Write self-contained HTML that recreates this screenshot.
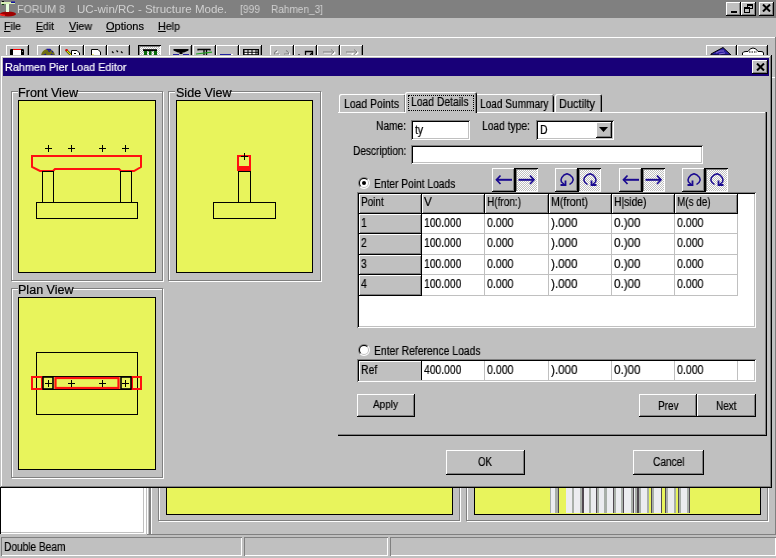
<!DOCTYPE html><html><head><meta charset="utf-8"><style>
html,body{margin:0;padding:0}
body{width:776px;height:558px;overflow:hidden;background:#c0c0c0;position:relative;font-family:"Liberation Sans",sans-serif}
body div,body span,body svg{position:absolute}
.t{white-space:nowrap;transform-origin:0 0;will-change:transform;-webkit-text-stroke:0.2px currentColor}
.rz{background:#c0c0c0;box-shadow:inset -1px -1px #000,inset 1px 1px #fff,inset -2px -2px #808080}
.pz{background:repeating-conic-gradient(#fff 0 25%,#c0c0c0 0 50%) 0 0/2px 2px;box-shadow:inset 1px 1px #000,inset -1px -1px #fff,inset 2px 2px #808080}
.sk{box-shadow:inset 1px 1px #808080,inset -1px -1px #fff,inset 2px 2px #000,inset -2px -2px #c0c0c0}
</style></head><body>

<div style="left:0px;top:0px;width:776px;height:18px;background:#808080"></div>
<svg style="left:0;top:0" width="17" height="18" viewBox="0 0 17 18">
<ellipse cx="8" cy="14" rx="8" ry="2.6" fill="#a00000"/>
<path d="M0 14.5 L5 15.5" stroke="#ff2020" stroke-width="1.5"/>
<rect x="1" y="2" width="14" height="2" fill="#d8f0b8"/>
<rect x="11" y="1.5" width="4" height="1.5" fill="#1010a0"/>
<rect x="6" y="4" width="3" height="8" fill="#e8ffe0"/>
<rect x="2" y="1" width="2" height="1" fill="#000"/>
<rect x="2" y="4" width="2" height="1" fill="#004000"/>
</svg>
<span class="t" style="left:17.2px;top:4.1px;font-size:11px;line-height:11px;color:#d0d0d0;transform:scaleX(0.9697);-webkit-text-stroke:0">FORUM 8</span>
<span class="t" style="left:77.2px;top:4.1px;font-size:11px;line-height:11px;color:#d0d0d0;transform:scaleX(1.0486);-webkit-text-stroke:0">UC-win/RC - Structure Mode.</span>
<span class="t" style="left:240.2px;top:4.1px;font-size:11px;line-height:11px;color:#d0d0d0;transform:scaleX(0.9336);-webkit-text-stroke:0">[999</span>
<span class="t" style="left:271.2px;top:4.1px;font-size:11px;line-height:11px;color:#d0d0d0;transform:scaleX(0.9143);-webkit-text-stroke:0">Rahmen_3]</span>
<div class="rz" style="left:726px;top:2px;width:15px;height:14px;"></div>
<div class="rz" style="left:741px;top:2px;width:15px;height:14px;"></div>
<div class="rz" style="left:759px;top:2px;width:15px;height:14px;"></div>
<div style="left:731px;top:11px;width:6px;height:2px;background:#000"></div>
<div style="left:747px;top:4px;width:6px;height:5px;border:1px solid #000;border-top-width:2px;box-sizing:border-box"></div>
<div style="left:744px;top:7px;width:6px;height:6px;border:1px solid #000;border-top-width:2px;box-sizing:border-box;background:#c0c0c0"></div>
<svg style="left:762px;top:4px" width="9" height="8"><path d="M1 0.5 L8 7.5 M8 0.5 L1 7.5" stroke="#000" stroke-width="2"/></svg>
<span class="t" style="left:4.2px;top:20.7px;font-size:11px;line-height:11px;color:#000;transform:scaleX(0.9577);"><u>F</u>ile</span>
<span class="t" style="left:36.2px;top:20.7px;font-size:11px;line-height:11px;color:#000;transform:scaleX(0.9489);"><u>E</u>dit</span>
<span class="t" style="left:69.2px;top:20.7px;font-size:11px;line-height:11px;color:#000;transform:scaleX(0.9723);"><u>V</u>iew</span>
<span class="t" style="left:106.2px;top:20.7px;font-size:11px;line-height:11px;color:#000;transform:scaleX(1.0021);"><u>O</u>ptions</span>
<span class="t" style="left:158.2px;top:20.7px;font-size:11px;line-height:11px;color:#000;transform:scaleX(0.9717);"><u>H</u>elp</span>
<div style="left:0px;top:37px;width:775px;height:1px;background:#fff"></div>
<div style="left:775px;top:37px;width:1px;height:30px;background:#808080"></div>
<div class="rz" style="left:6px;top:45px;width:23px;height:23px;"></div>
<div class="rz" style="left:37px;top:45px;width:23px;height:23px;"></div>
<div class="rz" style="left:60px;top:45px;width:24px;height:23px;"></div>
<div class="rz" style="left:84px;top:45px;width:23px;height:23px;"></div>
<div class="rz" style="left:107px;top:45px;width:23px;height:23px;"></div>
<div class="rz" style="left:169px;top:45px;width:23px;height:23px;"></div>
<div class="rz" style="left:193px;top:45px;width:23px;height:23px;"></div>
<div class="rz" style="left:216px;top:45px;width:23px;height:23px;"></div>
<div class="rz" style="left:239px;top:45px;width:23px;height:23px;"></div>
<div class="rz" style="left:270px;top:45px;width:24px;height:23px;"></div>
<div class="rz" style="left:294px;top:45px;width:23px;height:23px;"></div>
<div class="rz" style="left:317px;top:45px;width:23px;height:23px;"></div>
<div class="rz" style="left:340px;top:45px;width:23px;height:23px;"></div>
<div class="rz" style="left:706px;top:45px;width:31px;height:23px;"></div>
<div class="rz" style="left:737px;top:45px;width:31px;height:23px;"></div>
<div class="pz" style="left:138px;top:45px;width:23px;height:23px;"></div>
<svg style="left:10px;top:48px" width="15" height="8" viewBox="0 0 15 8"><path d="M0 2 Q0 1 1.5 1 H3 V8 H0 Z M11 1 H12.5 Q14 1 14 2 V8 H11 Z" fill="#000"/><rect x="3" y="1" width="8" height="7" fill="#fff"/><rect x="3" y="1" width="8" height="1" fill="#f00"/><rect x="12" y="3" width="1" height="1" fill="#808080"/></svg>
<svg style="left:40px;top:48px" width="16" height="8" viewBox="0 0 16 8"><path d="M1 8 A7 7 0 0 1 15 8 Z" fill="#707010"/><path d="M6.5 1.3 H10 L11 2.5 M8 2.5 L10 3.5 M12 3 L13 4.5 M1.5 7.5 H4 L6 6 M11 6 L12.5 7.5 H15" stroke="#1a10a0" stroke-width="1.3" fill="none"/></svg>
<svg style="left:62px;top:49px" width="20" height="7" viewBox="0 0 20 7"><path d="M2 6.5 H7" stroke="#000"/><path d="M4 1 L9 6" stroke="#000" stroke-width="2.4"/><path d="M4 1 L9 6" stroke="#e8e800" stroke-width="1.2"/><rect x="3.5" y="0" width="2" height="2" fill="#e00"/><path d="M9.5 7 V1.5 H15 L17.5 4 V7" fill="#fff" stroke="#000"/><path d="M12 4.5 H14" stroke="#000"/></svg>
<svg style="left:90px;top:48px" width="12" height="8" viewBox="0 0 12 8"><path d="M1.5 8 V1.5 H8 L10.5 4 V8" fill="#fff" stroke="#000"/><rect x="2" y="6.5" width="2" height="1.5" fill="#e0e000"/></svg>
<svg style="left:111px;top:50px" width="14" height="5" viewBox="0 0 14 5"><path d="M1 1.5 L2.5 3 M5.5 0.5 L7 2 M10 1.5 L11.5 3" stroke="#000" stroke-width="1.2"/></svg>
<svg style="left:142px;top:48px" width="16" height="8" viewBox="0 0 16 8"><rect x="1" y="1.2" width="14" height="2" fill="#000"/><rect x="2" y="3" width="3" height="5" fill="#0a6a0a"/><rect x="7" y="3" width="2.5" height="5" fill="#0a6a0a"/><rect x="12" y="3" width="3" height="5" fill="#0a6a0a"/></svg>
<svg style="left:172px;top:48px" width="18" height="8" viewBox="0 0 18 8"><path d="M1.5 1 H16.5 V2.5 L12 4.5 H10.5 V6 H7.5 V4.5 H6 L1.5 2.5 Z" fill="#000"/><path d="M1 6.5 H7 M11 6.5 H17" stroke="#2020a0" stroke-width="1.2"/></svg>
<svg style="left:195px;top:48px" width="19" height="8" viewBox="0 0 19 8"><path d="M3 2.5 V1.5 H15 V2.5" stroke="#000" stroke-width="1.3" fill="none"/><path d="M9 1.5 V8 M11.5 1.5 V8" stroke="#000" stroke-width="1.3"/><path d="M1 6 L17 4.2" stroke="#20a020" stroke-width="1.2"/></svg>
<div style="left:220px;top:54px;width:11px;height:1px;background:#2020a0"></div>
<div style="left:231px;top:54px;width:2px;height:1px;background:#fff"></div>
<svg style="left:243px;top:49px" width="16" height="7" viewBox="0 0 16 7"><rect x="0" y="0" width="16" height="7" fill="#000"/><path d="M1.5 2 H14.5 M1.5 4.5 H14.5" stroke="#fff" stroke-width="1.3" stroke-dasharray="3 1"/></svg>
<svg style="left:273px;top:49px" width="18" height="7" viewBox="0 0 18 7"><g stroke="#fff" fill="none" stroke-width="1.3" transform="translate(1,1)"><path d="M4 1.5 Q1 3 1.5 5 H6 M11 5 H15.5 Q16 3 13 1.5"/></g><g stroke="#808080" fill="none" stroke-width="1.1"><path d="M4 1.5 Q1 3 1.5 5 H6 M11 5 H15.5 Q16 3 13 1.5"/></g></svg>
<svg style="left:297px;top:50px" width="17" height="6" viewBox="0 0 17 6"><path d="M1.5 4 L3 5.5" stroke="#000"/><path d="M8.5 6 V1.5 H15.5 V6 M13 5 L15 3" stroke="#000" stroke-width="1.3" fill="none"/></svg>
<svg style="left:322px;top:49px" width="14" height="7" viewBox="0 0 14 7"><g stroke="#fff" fill="none" stroke-width="1.2" transform="translate(1,1)"><path d="M1 3 H12 M9 0.5 L12 3 L9 5.5"/></g><g stroke="#808080" fill="none"><path d="M1 3 H12 M9 0.5 L12 3 L9 5.5"/></g></svg>
<svg style="left:345px;top:49px" width="14" height="7" viewBox="0 0 14 7"><g stroke="#fff" fill="none" stroke-width="1.2" transform="translate(1,1)"><path d="M1 3 H12 M9 0.5 L12 3 L9 5.5 M5 6 L8 2"/></g><g stroke="#808080" fill="none"><path d="M1 3 H12 M9 0.5 L12 3 L9 5.5"/></g></svg>
<svg style="left:710px;top:46px" width="22" height="9" viewBox="0 0 22 9"><path d="M1 9 V8 L13 1.5 L21 9 Z" fill="#2a1ea0" stroke="#000" stroke-width="1"/><path d="M6 7 Q10 4 14 5 M9 8 L15 7" stroke="#8a70d0" fill="none"/></svg>
<svg style="left:741px;top:47px" width="24" height="8" viewBox="0 0 24 8"><path d="M1.5 8 V6 Q2 4.5 5 4.5 H7 Q9 1 12 1 Q15 1 17 4.5 H20 Q22.5 4.5 22.5 6 V8" fill="#fff" stroke="#000"/><path d="M8 5 H16" stroke="#808080" stroke-width="2" stroke-dasharray="1.5 1"/></svg>
<div style="left:772px;top:55px;width:3px;height:432px;background:#c0c0c0"></div>
<div style="left:772px;top:77px;width:3px;height:1px;background:#fff"></div>
<div style="left:0px;top:487px;width:145px;height:47px;background:#fff;border-left:1px solid #000;border-top:1px solid #000;box-sizing:border-box;box-shadow:inset -1px -1px #fff,inset -2px -2px #c0c0c0"></div>
<div style="left:145px;top:487px;width:1px;height:47px;background:#fff"></div>
<div style="left:147px;top:487px;width:1px;height:47px;background:#fff"></div>
<div style="left:149px;top:487px;width:2px;height:48px;background:#808080"></div>
<div style="left:151px;top:487px;width:1px;height:47px;background:#fff"></div>
<div style="left:158px;top:470px;width:300px;height:49px;border:1px solid #808080;box-shadow:inset 1px 1px #fff,1px 1px #fff"></div>
<div style="left:166px;top:480px;width:287px;height:35px;background:#e8f45c;border:1px solid #000;box-sizing:border-box"></div>
<div style="left:466px;top:470px;width:300px;height:49px;border:1px solid #808080;box-shadow:inset 1px 1px #fff,1px 1px #fff"></div>
<div style="left:474px;top:480px;width:287px;height:35px;background:#e8f45c;border:1px solid #000;box-sizing:border-box"></div>
<div style="left:550px;top:488px;width:1px;height:25px;background:#a8aea8"></div>
<div style="left:551px;top:488px;width:4px;height:25px;background:#ececf0"></div>
<div style="left:555px;top:488px;width:3px;height:25px;background:#a8aea8"></div>
<div style="left:558px;top:488px;width:1px;height:25px;background:#504850"></div>
<div style="left:559px;top:488px;width:7px;height:25px;background:#e8f45c"></div>
<div style="left:566px;top:488px;width:6px;height:25px;background:#ececf0"></div>
<div style="left:572px;top:488px;width:2px;height:25px;background:#a8aea8"></div>
<div style="left:574px;top:488px;width:6px;height:25px;background:#ececf0"></div>
<div style="left:580px;top:488px;width:2px;height:25px;background:#a8aea8"></div>
<div style="left:582px;top:488px;width:2px;height:25px;background:#504850"></div>
<div style="left:584px;top:488px;width:5px;height:25px;background:#ececf0"></div>
<div style="left:589px;top:488px;width:2px;height:25px;background:#a8aea8"></div>
<div style="left:591px;top:488px;width:5px;height:25px;background:#ececf0"></div>
<div style="left:596px;top:488px;width:1px;height:25px;background:#504850"></div>
<div style="left:597px;top:488px;width:2px;height:25px;background:#a8aea8"></div>
<div style="left:599px;top:488px;width:5px;height:25px;background:#ececf0"></div>
<div style="left:604px;top:488px;width:3px;height:25px;background:#a8aea8"></div>
<div style="left:607px;top:488px;width:6px;height:25px;background:#ececf0"></div>
<div style="left:613px;top:488px;width:1px;height:25px;background:#504850"></div>
<div style="left:614px;top:488px;width:2px;height:25px;background:#a8aea8"></div>
<div style="left:616px;top:488px;width:5px;height:25px;background:#ececf0"></div>
<div style="left:621px;top:488px;width:2px;height:25px;background:#a8aea8"></div>
<div style="left:623px;top:488px;width:1px;height:25px;background:#504850"></div>
<div style="left:624px;top:488px;width:7px;height:25px;background:#ececf0"></div>
<div style="left:631px;top:488px;width:2px;height:25px;background:#a8aea8"></div>
<div style="left:633px;top:488px;width:1px;height:25px;background:#504850"></div>
<div style="left:634px;top:488px;width:1px;height:25px;background:#ececf0"></div>
<div style="left:635px;top:488px;width:2px;height:25px;background:#a8aea8"></div>
<div style="left:637px;top:488px;width:2px;height:25px;background:#504850"></div>
<div style="left:639px;top:488px;width:2px;height:25px;background:#a8aea8"></div>
<div style="left:641px;top:488px;width:6px;height:25px;background:#ececf0"></div>
<div style="left:647px;top:488px;width:2px;height:25px;background:#a8aea8"></div>
<div style="left:649px;top:488px;width:2px;height:25px;background:#e8f45c"></div>
<div style="left:651px;top:488px;width:1px;height:25px;background:#504850"></div>
<div style="left:652px;top:488px;width:2px;height:25px;background:#a8aea8"></div>
<div style="left:654px;top:488px;width:7px;height:25px;background:#ececf0"></div>
<div style="left:661px;top:488px;width:1px;height:25px;background:#504850"></div>
<div style="left:662px;top:488px;width:3px;height:25px;background:#e8f45c"></div>
<div style="left:665px;top:488px;width:1px;height:25px;background:#504850"></div>
<div style="left:666px;top:488px;width:2px;height:25px;background:#a8aea8"></div>
<div style="left:668px;top:488px;width:6px;height:25px;background:#ececf0"></div>
<div style="left:674px;top:488px;width:2px;height:25px;background:#a8aea8"></div>
<div style="left:676px;top:488px;width:2px;height:25px;background:#e8f45c"></div>
<div style="left:678px;top:488px;width:1px;height:25px;background:#504850"></div>
<div style="left:679px;top:488px;width:2px;height:25px;background:#a8aea8"></div>
<div style="left:681px;top:488px;width:6px;height:25px;background:#ececf0"></div>
<div style="left:687px;top:488px;width:2px;height:25px;background:#a8aea8"></div>
<div style="left:689px;top:488px;width:1px;height:25px;background:#504850"></div>
<div style="left:775px;top:55px;width:1px;height:479px;background:#808080"></div>
<div style="left:0px;top:534px;width:776px;height:24px;background:#c0c0c0"></div>
<div style="left:147px;top:534px;width:629px;height:1px;background:#808080"></div>
<div style="left:1px;top:537px;width:241px;height:19px;box-shadow:inset 1px 1px #808080,inset -1px -1px #fff"></div>
<div style="left:244px;top:537px;width:144px;height:19px;box-shadow:inset 1px 1px #808080,inset -1px -1px #fff"></div>
<div style="left:390px;top:537px;width:386px;height:19px;box-shadow:inset 1px 1px #808080,inset -1px -1px #fff"></div>
<span class="t" style="left:4.2px;top:540.8px;font-size:12px;line-height:12px;color:#000;transform:scaleX(0.8457);">Double Beam</span>
<div style="left:0;top:55px;width:772px;height:433px;background:#c0c0c0;box-shadow:inset -1px -1px #000,inset 1px 1px #c0c0c0,inset -2px -2px #808080,inset 2px 2px #fff"></div>
<div style="left:3px;top:58px;width:766px;height:18px;background:#180078"></div>
<span class="t" style="left:5.2px;top:61.7px;font-size:11px;line-height:11px;color:#fff;transform:scaleX(0.9837);">Rahmen Pier Load Editor</span>
<div class="rz" style="left:752px;top:60px;width:16px;height:14px;"></div>
<svg style="left:756px;top:63px" width="9" height="8"><path d="M1 0.5 L8 7.5 M8 0.5 L1 7.5" stroke="#000" stroke-width="2"/></svg>
<div style="left:11px;top:91px;width:150px;height:188px;border:1px solid #808080;box-shadow:inset 1px 1px #fff,1px 1px #fff"></div>
<div style="left:168px;top:91px;width:151px;height:188px;border:1px solid #808080;box-shadow:inset 1px 1px #fff,1px 1px #fff"></div>
<div style="left:11px;top:288px;width:150px;height:188px;border:1px solid #808080;box-shadow:inset 1px 1px #fff,1px 1px #fff"></div>
<div style="left:18px;top:100px;width:138px;height:173px;background:#e8f45c;border:1px solid #000;box-sizing:border-box"></div>
<div style="left:176px;top:100px;width:137px;height:173px;background:#e8f45c;border:1px solid #000;box-sizing:border-box"></div>
<div style="left:18px;top:297px;width:138px;height:173px;background:#e8f45c;border:1px solid #000;box-sizing:border-box"></div>
<div style="left:18px;top:86px;width:59px;height:10px;background:#c0c0c0"></div>
<div style="left:175px;top:86px;width:54px;height:10px;background:#c0c0c0"></div>
<div style="left:18px;top:283px;width:55px;height:10px;background:#c0c0c0"></div>
<span class="t" style="left:18.2px;top:86.8px;font-size:12px;line-height:12px;color:#000;transform:scaleX(1.05);">Front View</span>
<span class="t" style="left:176.2px;top:86.8px;font-size:12px;line-height:12px;color:#000;transform:scaleX(1.046);">Side View</span>
<span class="t" style="left:18.2px;top:283.8px;font-size:12px;line-height:12px;color:#000;transform:scaleX(1.046);">Plan View</span>
<svg style="left:18px;top:100px" width="138" height="173" viewBox="18 100 138 173">
<path d="M32 156 H141 V167 L134 171 H121 L119 169 H55 L53 171 H40 L32 167 Z" fill="none" stroke="#ff1010" stroke-width="2"/>
<rect x="42.5" y="171.5" width="11" height="31" fill="none" stroke="#000"/>
<rect x="120.5" y="171.5" width="11" height="31" fill="none" stroke="#000"/>
<rect x="36.5" y="202.5" width="101" height="16" fill="none" stroke="#000"/>
<path d="M45 148.5 H52 M48.5 145 V152 M68 148.5 H75 M71.5 145 V152 M99 148.5 H106 M102.5 145 V152 M122 148.5 H129 M125.5 145 V152" stroke="#000"/>
</svg>
<svg style="left:176px;top:100px" width="137" height="173" viewBox="176 100 137 173">
<rect x="238" y="156" width="12" height="14" fill="none" stroke="#ff1010" stroke-width="2"/>
<rect x="238" y="166" width="12" height="5" fill="#ff1010"/>
<rect x="238.5" y="171.5" width="12" height="31" fill="none" stroke="#000"/>
<rect x="213.5" y="202.5" width="62" height="16" fill="none" stroke="#000"/>
<path d="M241 156.5 H248 M244.5 153 V160" stroke="#000"/>
</svg>
<svg style="left:18px;top:297px" width="138" height="173" viewBox="18 297 138 173">
<rect x="36.5" y="352.5" width="101" height="62" fill="none" stroke="#000"/>
<path d="M36 376.5 H137 M36 389.5 H137" stroke="#000"/>
<rect x="32" y="377" width="10" height="12" fill="none" stroke="#ff1010" stroke-width="2"/>
<rect x="132" y="377" width="9" height="12" fill="none" stroke="#ff1010" stroke-width="2"/>
<rect x="55.5" y="378" width="63" height="10" fill="none" stroke="#ff1010" stroke-width="2.2"/>
<rect x="43" y="377" width="10" height="12" fill="none" stroke="#000" stroke-width="1.6"/>
<rect x="121" y="377" width="10" height="12" fill="none" stroke="#000" stroke-width="1.6"/>
<path d="M45 383.5 H52 M48.5 380 V387 M68 383.5 H75 M71.5 380 V387 M99 383.5 H106 M102.5 380 V387 M122 383.5 H129 M125.5 380 V387" stroke="#000"/>
</svg>
<div style="left:338px;top:112px;width:428px;height:1px;background:#fff"></div>
<div style="left:765px;top:112px;width:1px;height:323px;background:#808080"></div>
<div style="left:766px;top:112px;width:1px;height:324px;background:#000"></div>
<div style="left:338px;top:434px;width:428px;height:1px;background:#808080"></div>
<div style="left:338px;top:435px;width:429px;height:1px;background:#000"></div>
<div style="left:339px;top:94px;width:67px;height:18px;background:#c0c0c0;box-shadow:inset 1px 1px #fff,inset -1px 0 #000,inset -2px 0 #808080;border-radius:2px 2px 0 0"></div>
<div style="left:477px;top:94px;width:77px;height:18px;background:#c0c0c0;box-shadow:inset 0 1px #fff,inset -1px 0 #000,inset -2px 0 #808080;border-radius:0 2px 0 0"></div>
<div style="left:555px;top:94px;width:47px;height:18px;background:#c0c0c0;box-shadow:inset 1px 1px #fff,inset -1px 0 #000,inset -2px 0 #808080;border-radius:2px 2px 0 0"></div>
<div style="left:405px;top:92px;width:72px;height:21px;background:#c0c0c0;box-shadow:inset 1px 1px #fff,inset -1px 0 #000,inset -2px 0 #808080;border-radius:2px 2px 0 0"></div>
<div style="left:406px;top:112px;width:69px;height:1px;background:#c0c0c0"></div>
<span class="t" style="left:344.2px;top:97.8px;font-size:12px;line-height:12px;color:#000;transform:scaleX(0.8676);">Load Points</span>
<span class="t" style="left:411.2px;top:95.8px;font-size:12px;line-height:12px;color:#000;transform:scaleX(0.8618);">Load Details</span>
<span class="t" style="left:480.2px;top:97.8px;font-size:12px;line-height:12px;color:#000;transform:scaleX(0.8418);">Load Summary</span>
<span class="t" style="left:559.2px;top:97.8px;font-size:12px;line-height:12px;color:#000;transform:scaleX(0.915);">Ductilty</span>
<div style="left:408px;top:95px;width:66px;height:16px;box-sizing:border-box;border:1px dotted #000"></div>
<span class="t" style="left:376.2px;top:119.8px;font-size:12px;line-height:12px;color:#000;transform:scaleX(0.8488);">Name:</span>
<div class="sk" style="left:411px;top:120px;width:59px;height:20px;background:#fff;"></div>
<span class="t" style="left:414.7px;top:123.8px;font-size:12px;line-height:12px;color:#000;transform:scaleX(0.87);">ty</span>
<span class="t" style="left:482.2px;top:119.8px;font-size:12px;line-height:12px;color:#000;transform:scaleX(0.8564);">Load type:</span>
<div class="sk" style="left:536px;top:120px;width:78px;height:20px;background:#fff;"></div>
<span class="t" style="left:540.2px;top:123.8px;font-size:12px;line-height:12px;color:#000;transform:scaleX(0.87);">D</span>
<div class="rz" style="left:596px;top:122px;width:16px;height:16px;"></div>
<svg style="left:599px;top:127px" width="9" height="6"><path d="M0 0 H9 L4.5 5 Z" fill="#000"/></svg>
<span class="t" style="left:353.2px;top:144.8px;font-size:12px;line-height:12px;color:#000;transform:scaleX(0.8412);">Description:</span>
<div class="sk" style="left:411px;top:145px;width:292px;height:19px;background:#fff;"></div>
<svg style="left:358px;top:177px" width="12" height="12" viewBox="0 0 12 12">
<path d="M10.2426 1.7574000000000005 A6 6 0 0 0 1.7574000000000005 10.2426 Z" fill="#808080"/><path d="M1.7574000000000005 10.2426 A6 6 0 0 0 10.2426 1.7574000000000005 Z" fill="#fff"/><path d="M9.535499999999999 2.4645 A5 5 0 0 0 2.4645 9.535499999999999 Z" fill="#000"/><path d="M2.4645 9.535499999999999 A5 5 0 0 0 9.535499999999999 2.4645 Z" fill="#c0c0c0"/>
<circle cx="6" cy="6" r="4" fill="#fff"/>
<circle cx="6" cy="6" r="2" fill="#000"/>
</svg>
<span class="t" style="left:374.2px;top:177.8px;font-size:12px;line-height:12px;color:#000;transform:scaleX(0.8511);">Enter Point Loads</span>
<svg style="left:358px;top:344px" width="12" height="12" viewBox="0 0 12 12">
<path d="M10.2426 1.7574000000000005 A6 6 0 0 0 1.7574000000000005 10.2426 Z" fill="#808080"/><path d="M1.7574000000000005 10.2426 A6 6 0 0 0 10.2426 1.7574000000000005 Z" fill="#fff"/><path d="M9.535499999999999 2.4645 A5 5 0 0 0 2.4645 9.535499999999999 Z" fill="#000"/><path d="M2.4645 9.535499999999999 A5 5 0 0 0 9.535499999999999 2.4645 Z" fill="#c0c0c0"/>
<circle cx="6" cy="6" r="4" fill="#fff"/>

</svg>
<span class="t" style="left:374.2px;top:344.8px;font-size:12px;line-height:12px;color:#000;transform:scaleX(0.8629);">Enter Reference Loads</span>
<div class="rz" style="left:492px;top:168px;width:23px;height:24px;"></div>
<svg style="left:492px;top:168px" width="23" height="23" viewBox="0 0 23 23"><path d="M4.5 11.8 H20" stroke="#1a0a90" stroke-width="2"/><path d="M8.5 7.5 L4.5 11.8 L8.5 16" stroke="#1a0a90" stroke-width="1.7" fill="none"/></svg>
<div class="pz" style="left:515px;top:168px;width:23px;height:24px;"></div>
<svg style="left:515px;top:168px" width="23" height="23" viewBox="0 0 23 23"><path d="M3.5 11.8 H19" stroke="#1a0a90" stroke-width="2"/><path d="M15 7.5 L19 11.8 L15 16" stroke="#1a0a90" stroke-width="1.7" fill="none"/></svg>
<div class="rz" style="left:619px;top:168px;width:23px;height:24px;"></div>
<svg style="left:619px;top:168px" width="23" height="23" viewBox="0 0 23 23"><path d="M4.5 11.8 H20" stroke="#1a0a90" stroke-width="2"/><path d="M8.5 7.5 L4.5 11.8 L8.5 16" stroke="#1a0a90" stroke-width="1.7" fill="none"/></svg>
<div class="pz" style="left:642px;top:168px;width:23px;height:24px;"></div>
<svg style="left:642px;top:168px" width="23" height="23" viewBox="0 0 23 23"><path d="M3.5 11.8 H19" stroke="#1a0a90" stroke-width="2"/><path d="M15 7.5 L19 11.8 L15 16" stroke="#1a0a90" stroke-width="1.7" fill="none"/></svg>
<div class="rz" style="left:555px;top:168px;width:23px;height:24px;"></div>
<svg style="left:555px;top:168px" width="23" height="23" viewBox="0 0 23 23"><path d="M14.5 16.5 L17 14.5 L18.2 12 L17.5 9.5 L15 7 L12 5.8 L9 7 L6.8 9.5 L6 12 L6.5 14 L10 17" stroke="#1a0a90" stroke-width="1.5" fill="none" stroke-linejoin="round"/><path d="M5.5 17 H10.5 V12.5" stroke="#1a0a90" stroke-width="1.8" fill="none"/></svg>
<div class="pz" style="left:578px;top:168px;width:23px;height:24px;"></div>
<svg style="left:578px;top:168px" width="23" height="23" viewBox="0 0 23 23"><g transform="translate(24,0) scale(-1,1)"><path d="M14.5 16.5 L17 14.5 L18.2 12 L17.5 9.5 L15 7 L12 5.8 L9 7 L6.8 9.5 L6 12 L6.5 14 L10 17" stroke="#1a0a90" stroke-width="1.5" fill="none" stroke-linejoin="round"/><path d="M5.5 17 H10.5 V12.5" stroke="#1a0a90" stroke-width="1.8" fill="none"/></g></svg>
<div class="rz" style="left:682px;top:168px;width:23px;height:24px;"></div>
<svg style="left:682px;top:168px" width="23" height="23" viewBox="0 0 23 23"><path d="M14.5 16.5 L17 14.5 L18.2 12 L17.5 9.5 L15 7 L12 5.8 L9 7 L6.8 9.5 L6 12 L6.5 14 L10 17" stroke="#1a0a90" stroke-width="1.5" fill="none" stroke-linejoin="round"/><path d="M5.5 17 H10.5 V12.5" stroke="#1a0a90" stroke-width="1.8" fill="none"/></svg>
<div class="pz" style="left:705px;top:168px;width:23px;height:24px;"></div>
<svg style="left:705px;top:168px" width="23" height="23" viewBox="0 0 23 23"><g transform="translate(24,0) scale(-1,1)"><path d="M14.5 16.5 L17 14.5 L18.2 12 L17.5 9.5 L15 7 L12 5.8 L9 7 L6.8 9.5 L6 12 L6.5 14 L10 17" stroke="#1a0a90" stroke-width="1.5" fill="none" stroke-linejoin="round"/><path d="M5.5 17 H10.5 V12.5" stroke="#1a0a90" stroke-width="1.8" fill="none"/></g></svg>
<div style="left:357px;top:192px;width:399px;height:136px;background:#fff;box-shadow:inset 1px 1px #808080,inset -1px -1px #fff,inset 2px 2px #000,inset -2px -2px #c0c0c0"></div>
<div style="left:359px;top:194px;width:62px;height:19px;background:#c0c0c0;box-shadow:inset 1px 1px #fff,inset -1px -1px #808080"></div>
<div style="left:421px;top:194px;width:1px;height:20px;background:#000"></div>
<span class="t" style="left:361.2px;top:195.8px;font-size:12px;line-height:12px;color:#000;transform:scaleX(0.8297);">Point</span>
<div style="left:422px;top:194px;width:62px;height:19px;background:#c0c0c0;box-shadow:inset 1px 1px #fff,inset -1px -1px #808080"></div>
<div style="left:484px;top:194px;width:1px;height:20px;background:#000"></div>
<span class="t" style="left:424.2px;top:195.8px;font-size:12px;line-height:12px;color:#000;transform:scaleX(0.9731);">V</span>
<div style="left:485px;top:194px;width:63px;height:19px;background:#c0c0c0;box-shadow:inset 1px 1px #fff,inset -1px -1px #808080"></div>
<div style="left:548px;top:194px;width:1px;height:20px;background:#000"></div>
<span class="t" style="left:487.2px;top:195.8px;font-size:12px;line-height:12px;color:#000;transform:scaleX(0.836);">H(fron:)</span>
<div style="left:549px;top:194px;width:62px;height:19px;background:#c0c0c0;box-shadow:inset 1px 1px #fff,inset -1px -1px #808080"></div>
<div style="left:611px;top:194px;width:1px;height:20px;background:#000"></div>
<span class="t" style="left:551.2px;top:195.8px;font-size:12px;line-height:12px;color:#000;transform:scaleX(0.881);">M(front)</span>
<div style="left:612px;top:194px;width:62px;height:19px;background:#c0c0c0;box-shadow:inset 1px 1px #fff,inset -1px -1px #808080"></div>
<div style="left:674px;top:194px;width:1px;height:20px;background:#000"></div>
<span class="t" style="left:614.2px;top:195.8px;font-size:12px;line-height:12px;color:#000;transform:scaleX(0.8599);">H|side)</span>
<div style="left:675px;top:194px;width:62px;height:19px;background:#c0c0c0;box-shadow:inset 1px 1px #fff,inset -1px -1px #808080"></div>
<div style="left:737px;top:194px;width:1px;height:20px;background:#000"></div>
<span class="t" style="left:677.2px;top:195.8px;font-size:12px;line-height:12px;color:#000;transform:scaleX(0.8261);">M(s de)</span>
<div style="left:359px;top:213px;width:379px;height:1px;background:#000"></div>
<div style="left:359px;top:214px;width:62px;height:19px;background:#c0c0c0;box-shadow:inset 1px 1px #fff,inset -1px -1px #808080"></div>
<div style="left:421px;top:214px;width:1px;height:20px;background:#000"></div>
<div style="left:359px;top:233px;width:63px;height:1px;background:#000"></div>
<div style="left:422px;top:233px;width:316px;height:1px;background:#c0c0c0"></div>
<span class="t" style="left:361.2px;top:216.8px;font-size:12px;line-height:12px;color:#000;transform:scaleX(0.87);">1</span>
<span class="t" style="left:424.2px;top:216.8px;font-size:12px;line-height:12px;color:#000;transform:scaleX(0.8619);">100.000</span>
<span class="t" style="left:487.2px;top:216.8px;font-size:12px;line-height:12px;color:#000;transform:scaleX(0.8824);">0.000</span>
<span class="t" style="left:551.2px;top:216.8px;font-size:12px;line-height:12px;color:#000;transform:scaleX(0.9686);">).000</span>
<span class="t" style="left:614.2px;top:216.8px;font-size:12px;line-height:12px;color:#000;transform:scaleX(0.9686);">0.)00</span>
<span class="t" style="left:677.2px;top:216.8px;font-size:12px;line-height:12px;color:#000;transform:scaleX(0.8824);">0.000</span>
<div style="left:359px;top:234px;width:62px;height:20px;background:#c0c0c0;box-shadow:inset 1px 1px #fff,inset -1px -1px #808080"></div>
<div style="left:421px;top:234px;width:1px;height:21px;background:#000"></div>
<div style="left:359px;top:254px;width:63px;height:1px;background:#000"></div>
<div style="left:422px;top:254px;width:316px;height:1px;background:#c0c0c0"></div>
<span class="t" style="left:361.2px;top:236.8px;font-size:12px;line-height:12px;color:#000;transform:scaleX(0.87);">2</span>
<span class="t" style="left:424.2px;top:236.8px;font-size:12px;line-height:12px;color:#000;transform:scaleX(0.8619);">100.000</span>
<span class="t" style="left:487.2px;top:236.8px;font-size:12px;line-height:12px;color:#000;transform:scaleX(0.8824);">0.000</span>
<span class="t" style="left:551.2px;top:236.8px;font-size:12px;line-height:12px;color:#000;transform:scaleX(0.9686);">).000</span>
<span class="t" style="left:614.2px;top:236.8px;font-size:12px;line-height:12px;color:#000;transform:scaleX(0.9686);">0.)00</span>
<span class="t" style="left:677.2px;top:236.8px;font-size:12px;line-height:12px;color:#000;transform:scaleX(0.8824);">0.000</span>
<div style="left:359px;top:255px;width:62px;height:19px;background:#c0c0c0;box-shadow:inset 1px 1px #fff,inset -1px -1px #808080"></div>
<div style="left:421px;top:255px;width:1px;height:20px;background:#000"></div>
<div style="left:359px;top:274px;width:63px;height:1px;background:#000"></div>
<div style="left:422px;top:274px;width:316px;height:1px;background:#c0c0c0"></div>
<span class="t" style="left:361.2px;top:257.8px;font-size:12px;line-height:12px;color:#000;transform:scaleX(0.87);">3</span>
<span class="t" style="left:424.2px;top:257.8px;font-size:12px;line-height:12px;color:#000;transform:scaleX(0.8619);">100.000</span>
<span class="t" style="left:487.2px;top:257.8px;font-size:12px;line-height:12px;color:#000;transform:scaleX(0.8824);">0.000</span>
<span class="t" style="left:551.2px;top:257.8px;font-size:12px;line-height:12px;color:#000;transform:scaleX(0.9686);">).000</span>
<span class="t" style="left:614.2px;top:257.8px;font-size:12px;line-height:12px;color:#000;transform:scaleX(0.9686);">0.)00</span>
<span class="t" style="left:677.2px;top:257.8px;font-size:12px;line-height:12px;color:#000;transform:scaleX(0.8824);">0.000</span>
<div style="left:359px;top:275px;width:62px;height:20px;background:#c0c0c0;box-shadow:inset 1px 1px #fff,inset -1px -1px #808080"></div>
<div style="left:421px;top:275px;width:1px;height:21px;background:#000"></div>
<div style="left:359px;top:295px;width:63px;height:1px;background:#000"></div>
<div style="left:422px;top:295px;width:316px;height:1px;background:#c0c0c0"></div>
<span class="t" style="left:361.2px;top:277.8px;font-size:12px;line-height:12px;color:#000;transform:scaleX(0.87);">4</span>
<span class="t" style="left:424.2px;top:277.8px;font-size:12px;line-height:12px;color:#000;transform:scaleX(0.8619);">100.000</span>
<span class="t" style="left:487.2px;top:277.8px;font-size:12px;line-height:12px;color:#000;transform:scaleX(0.8824);">0.000</span>
<span class="t" style="left:551.2px;top:277.8px;font-size:12px;line-height:12px;color:#000;transform:scaleX(0.9686);">).000</span>
<span class="t" style="left:614.2px;top:277.8px;font-size:12px;line-height:12px;color:#000;transform:scaleX(0.9686);">0.)00</span>
<span class="t" style="left:677.2px;top:277.8px;font-size:12px;line-height:12px;color:#000;transform:scaleX(0.8824);">0.000</span>
<div style="left:484px;top:214px;width:1px;height:82px;background:#c0c0c0"></div>
<div style="left:548px;top:214px;width:1px;height:82px;background:#c0c0c0"></div>
<div style="left:611px;top:214px;width:1px;height:82px;background:#c0c0c0"></div>
<div style="left:674px;top:214px;width:1px;height:82px;background:#c0c0c0"></div>
<div style="left:737px;top:214px;width:1px;height:82px;background:#c0c0c0"></div>
<div style="left:357px;top:359px;width:399px;height:23px;background:#fff;box-shadow:inset 1px 1px #808080,inset -1px -1px #fff,inset 2px 2px #000,inset -2px -2px #c0c0c0"></div>
<div style="left:359px;top:361px;width:62px;height:19px;background:#c0c0c0;box-shadow:inset 1px 1px #fff"></div>
<div style="left:421px;top:361px;width:1px;height:19px;background:#000"></div>
<div style="left:484px;top:361px;width:1px;height:19px;background:#c0c0c0"></div>
<div style="left:548px;top:361px;width:1px;height:19px;background:#c0c0c0"></div>
<div style="left:611px;top:361px;width:1px;height:19px;background:#c0c0c0"></div>
<div style="left:674px;top:361px;width:1px;height:19px;background:#c0c0c0"></div>
<div style="left:737px;top:361px;width:1px;height:19px;background:#c0c0c0"></div>
<span class="t" style="left:361.2px;top:363.8px;font-size:12px;line-height:12px;color:#000;transform:scaleX(0.87);">Ref</span>
<span class="t" style="left:424.2px;top:363.8px;font-size:12px;line-height:12px;color:#000;transform:scaleX(0.8619);">400.000</span>
<span class="t" style="left:487.2px;top:363.8px;font-size:12px;line-height:12px;color:#000;transform:scaleX(0.8824);">0.000</span>
<span class="t" style="left:551.2px;top:363.8px;font-size:12px;line-height:12px;color:#000;transform:scaleX(0.9686);">).000</span>
<span class="t" style="left:614.2px;top:363.8px;font-size:12px;line-height:12px;color:#000;transform:scaleX(0.9686);">0.)00</span>
<span class="t" style="left:677.2px;top:363.8px;font-size:12px;line-height:12px;color:#000;transform:scaleX(0.8824);">0.000</span>
<div class="rz" style="left:357px;top:394px;width:58px;height:23px;"></div>
<span class="t" style="left:373.2px;top:399.2px;font-size:11px;line-height:11px;color:#000;transform:scaleX(0.9081);">Apply</span>
<div class="rz" style="left:639px;top:394px;width:58px;height:23px;"></div>
<span class="t" style="left:658.2px;top:399.8px;font-size:12px;line-height:12px;color:#000;transform:scaleX(0.8304);">Prev</span>
<div class="rz" style="left:697px;top:394px;width:59px;height:23px;"></div>
<span class="t" style="left:716.2px;top:399.8px;font-size:12px;line-height:12px;color:#000;transform:scaleX(0.8304);">Next</span>
<div class="rz" style="left:446px;top:450px;width:79px;height:25px;"></div>
<span class="t" style="left:478.2px;top:455.8px;font-size:12px;line-height:12px;color:#000;transform:scaleX(0.8072);">OK</span>
<div class="rz" style="left:633px;top:450px;width:71px;height:25px;"></div>
<span class="t" style="left:653.2px;top:455.8px;font-size:12px;line-height:12px;color:#000;transform:scaleX(0.8432);">Cancel</span>
</body></html>
